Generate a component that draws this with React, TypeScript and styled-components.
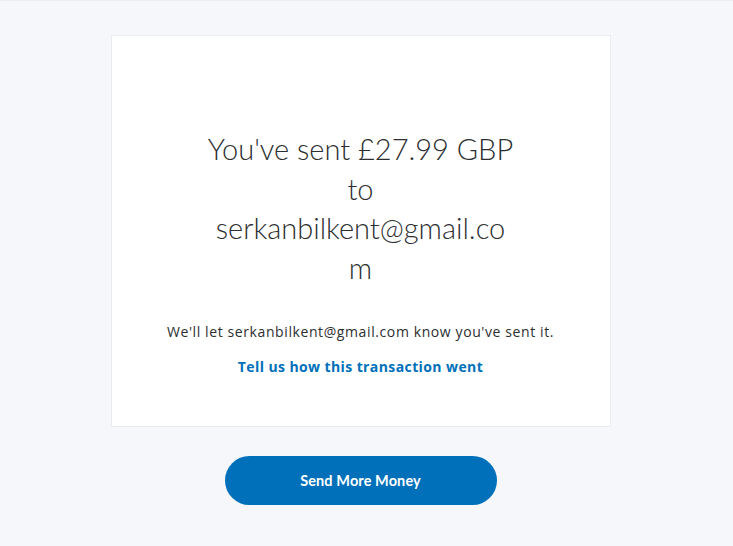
import styled, { createGlobalStyle } from "styled-components";

const Global = createGlobalStyle`
  html, body {
    margin: 0;
    padding: 0;
    background: #f5f7fa;
  }
  body {
    font-family: "Open Sans", "Liberation Sans", Arial, sans-serif;
    color: #2c2e2f;
  }
`;

const Page = styled.div`
  min-height: 546px;
  border-top: 1px solid #eceef1;
  box-sizing: border-box;
  display: flex;
  flex-direction: column;
  align-items: center;
  padding: 34px 12px 0 0;
`;

const Card = styled.div`
  width: 500px;
  height: 392px;
  box-sizing: border-box;
  background: #ffffff;
  border: 1px solid #eaeced;
  display: flex;
  flex-direction: column;
  align-items: center;
  padding-top: 93px;
`;

const Heading = styled.h1`
  margin: 0;
  width: 308px;
  font-family: Lato, "Liberation Sans", sans-serif;
  font-weight: 300;
  font-size: 29px;
  line-height: 39.5px;
  text-align: center;
  overflow-wrap: anywhere;
  color: #2c2e2f;
`;

const Note = styled.p`
  margin: 36px 0 0;
  font-size: 14px;
  line-height: 18px;
  letter-spacing: 0.6px;
  color: #2c2e2f;
`;

const Link = styled.a`
  margin-top: 16px;
  font-size: 14px;
  line-height: 20px;
  font-weight: 700;
  letter-spacing: 0.4px;
  color: #0070ba;
  text-decoration: none;
  cursor: pointer;
`;

const Button = styled.button`
  margin-top: 29px;
  width: 272px;
  height: 49px;
  border: none;
  border-radius: 25px;
  background: #0070ba;
  color: #ffffff;
  font-family: Lato, "Liberation Sans", sans-serif;
  font-size: 14.5px;
  font-weight: 700;
  letter-spacing: 0.1px;
  cursor: pointer;
`;

export default function App() {
  return (
    <>
      <Global />
      <Page>
        <Card>
          <Heading>You've sent £27.99 GBP to serkanbilkent@gmail.com</Heading>
          <Note>We'll let serkanbilkent@gmail.com know you've sent it.</Note>
          <Link>Tell us how this transaction went</Link>
        </Card>
        <Button>Send More Money</Button>
      </Page>
    </>
  );
}
